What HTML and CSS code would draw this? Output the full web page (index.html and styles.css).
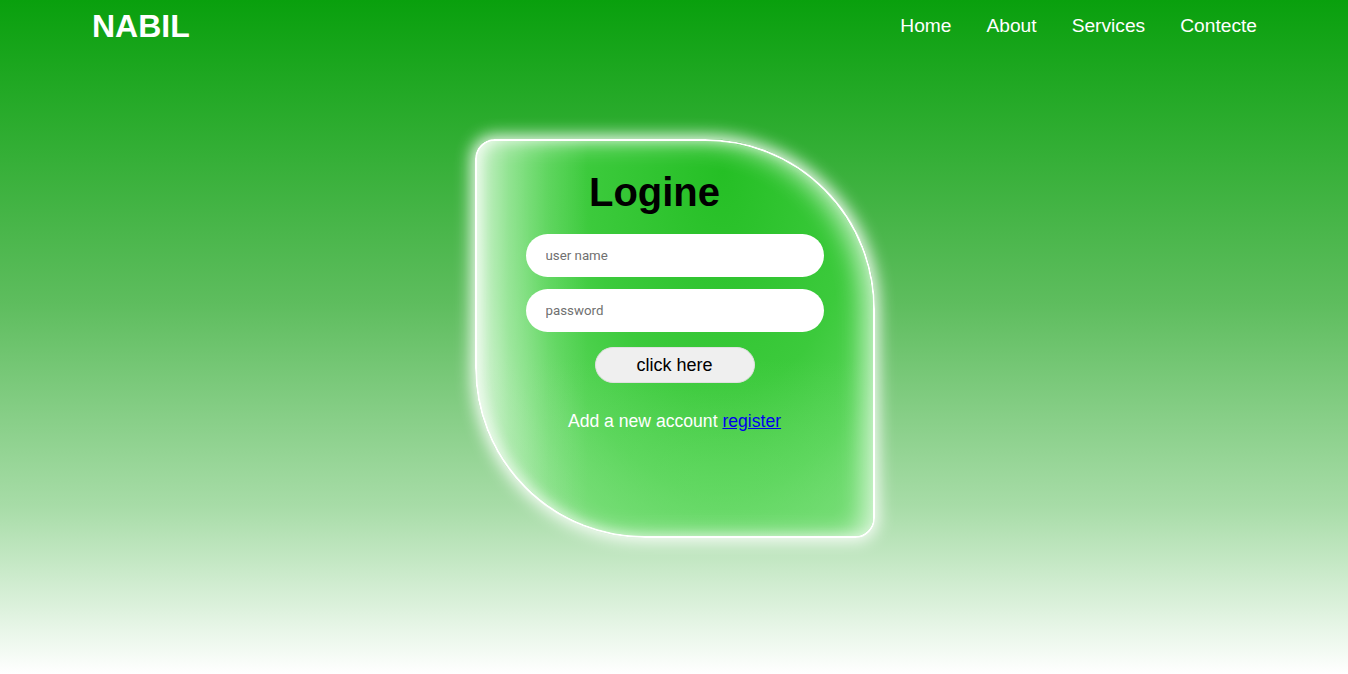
FILE: index.html
```html
<!DOCTYPE html>
<html lang="en">
<head>
<meta charset="utf-8">
<title>NABIL</title>
<link rel="stylesheet" href="styles.css">
</head>
<body>
<header class="header">
  <div class="logo">NABIL</div>
  <nav class="nav">
    <a href="#" class="nav-link">Home</a>
    <a href="#" class="nav-link">About</a>
    <a href="#" class="nav-link">Services</a>
    <a href="#" class="nav-link">Contecte</a>
  </nav>
</header>
<main class="main">
  <form class="card">
    <h1 class="title">Logine</h1>
    <input class="field" type="text" placeholder="user name" autofocus>
    <input class="field" type="password" placeholder="password">
    <button class="btn" type="button">click here</button>
    <p class="reg">Add a new account <a href="#" class="reg-link">register</a></p>
  </form>
</main>
</body>
</html>
```
FILE: styles.css
```css
html, body {
  margin: 0;
  padding: 0;
}
body {
  min-height: 100vh;
  font-family: "Liberation Sans", Arial, sans-serif;
  background: linear-gradient(to bottom, #09a00d 0%, #5ebd5e 45%, #a7dca7 75%, #ffffff 100%);
}
.header {
  display: flex;
  justify-content: space-between;
  align-items: center;
  padding: 6px 91px 0 92px;
  height: 40px;
}
.logo {
  color: #fff;
  font-size: 32px;
  font-weight: bold;
}
.nav {
  display: flex;
  gap: 35px;
}
.nav-link {
  color: #fff;
  text-decoration: none;
  font-size: 19.2px;
}
.main {
  display: flex;
  justify-content: center;
  padding-top: 93px;
}
.card {
  box-sizing: border-box;
  width: 400px;
  height: 399px;
  margin-left: 1px;
  border: 2px solid #fff;
  border-radius: 20px 170px 20px 170px;
  display: flex;
  flex-direction: column;
  align-items: center;
  padding-top: 28px;
  background:
    linear-gradient(to right, rgba(255,255,255,0.6) 0%, rgba(255,255,255,0.3) 8%, rgba(255,255,255,0.1) 18%, rgba(255,255,255,0) 28%),
    linear-gradient(to bottom, rgba(114,220,114,0) 55%, rgba(114,220,114,0.6) 100%),
    radial-gradient(ellipse 85% 140% at 62% 8%, #25bf25 0%, #3cca3c 40%, #55d455 58%, #72dc72 70%, #a4e6a4 84%, #d4f4d4 100%);
  box-shadow:
    inset 5px 0 12px rgba(255,255,255,0.5),
    inset -10px 0 24px rgba(255,255,255,0.65),
    0 0 16px 4px rgba(255,255,255,0.9);
}
.title {
  margin: 0 40px 19px 0;
  font-size: 40px;
  line-height: 46px;
  color: #000;
}
.field {
  box-sizing: border-box;
  width: 298px;
  height: 43px;
  border: none;
  outline: none;
  border-radius: 22px;
  padding: 0 20px;
  margin-bottom: 12px;
  background: #fff;
  font-family: Roboto, "Liberation Sans", sans-serif;
  font-size: 13.3px;
  color: #000;
}
.field::placeholder {
  color: #707070;
}
.btn {
  margin-top: 3px;
  width: 160px;
  height: 36px;
  border: 1px solid #e0e0e0;
  border-radius: 18px;
  background: #efefef;
  font-family: "Liberation Sans", Arial, sans-serif;
  font-size: 18px;
  color: #000;
}
.reg {
  margin: 28px 0 0;
  color: #fff;
  font-size: 17.6px;
  line-height: 21px;
}
.reg-link {
  color: #0000ee;
}
```
